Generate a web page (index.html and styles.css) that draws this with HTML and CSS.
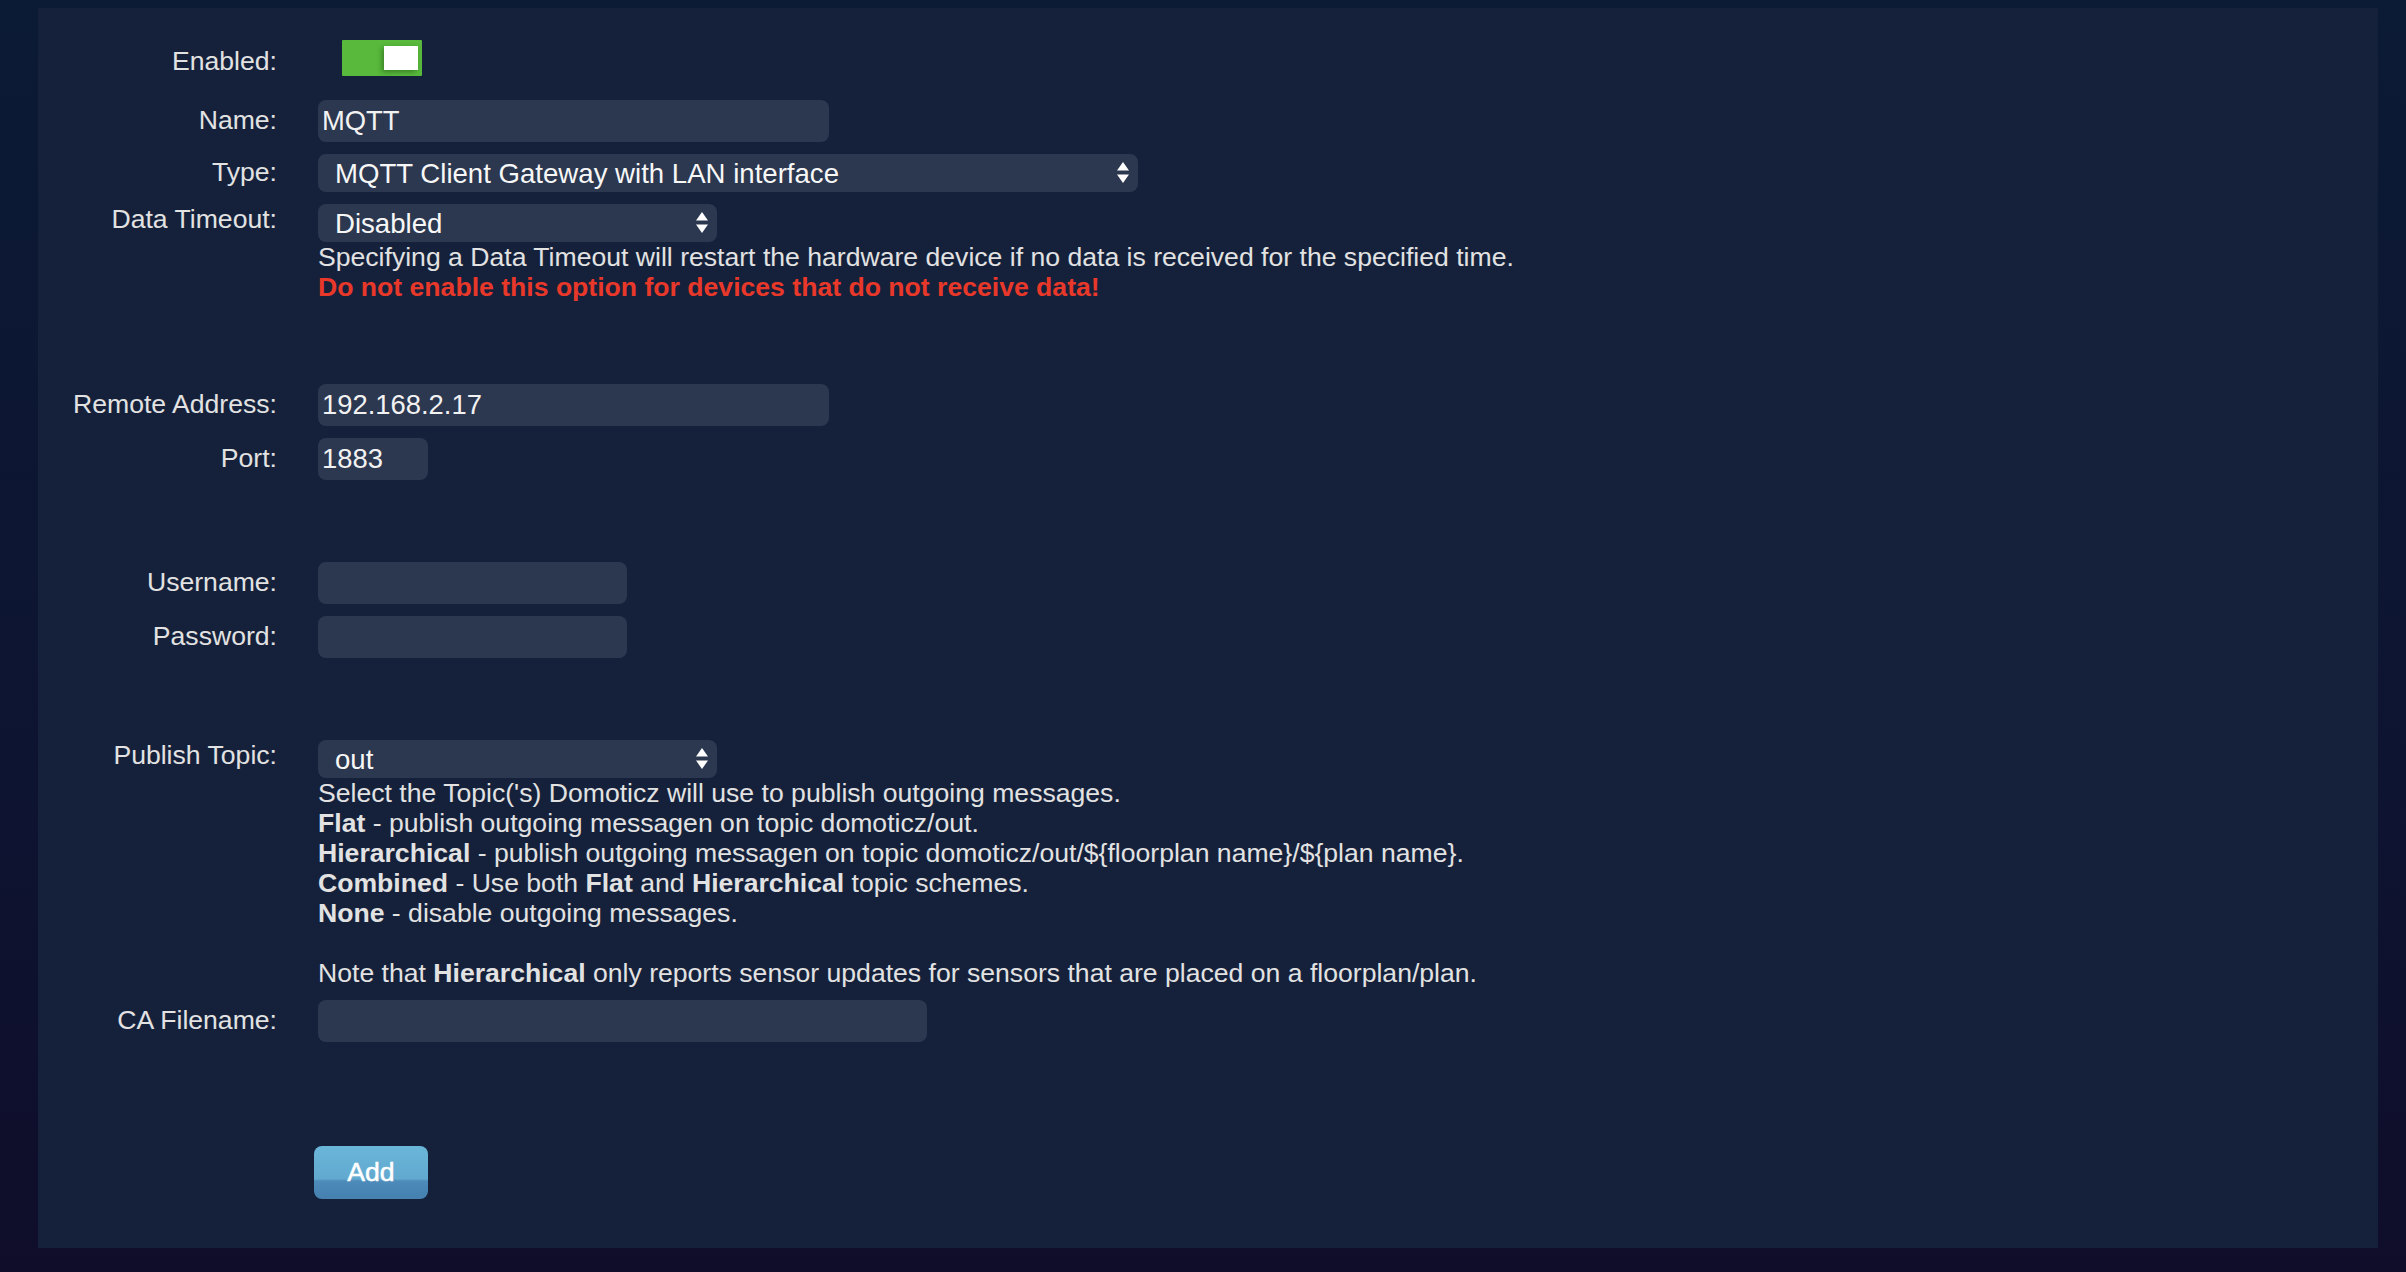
FILE: index.html
```html
<!DOCTYPE html>
<html lang="en">
<head>
<meta charset="utf-8">
<title>Hardware - MQTT</title>
<link rel="stylesheet" href="styles.css">
</head>
<body>
<div class="panel">
  <form class="hw-form">
    <div class="row row-enabled">
      <label class="lbl lbl-toggle">Enabled:</label>
      <div class="toggle"><span class="knob"></span></div>
    </div>

    <div class="row">
      <label class="lbl">Name:</label>
      <input class="field w-name" type="text" value="MQTT">
    </div>

    <div class="row">
      <label class="lbl lbl-sel">Type:</label>
      <div class="sel w-type">
        <select><option>MQTT Client Gateway with LAN interface</option></select>
        <svg class="arrows" width="12" height="22" viewBox="0 0 12 22"><path d="M6 0 L12 8.5 L0 8.5 Z M0 12.5 L12 12.5 L6 21 Z" fill="#ffffff"/></svg>
      </div>
    </div>

    <div class="row">
      <label class="lbl lbl-sel0">Data Timeout:</label>
      <div class="col">
        <div class="sel w-half">
          <select><option>Disabled</option></select>
          <svg class="arrows" width="12" height="22" viewBox="0 0 12 22"><path d="M6 0 L12 8.5 L0 8.5 Z M0 12.5 L12 12.5 L6 21 Z" fill="#ffffff"/></svg>
        </div>
        <div class="help">
          Specifying a Data Timeout will restart the hardware device if no data is received for the specified time.<br>
          <span class="warn">Do not enable this option for devices that do not receive data!</span>
        </div>
      </div>
    </div>

    <div class="spacer"></div>

    <div class="row">
      <label class="lbl">Remote Address:</label>
      <input class="field w-name" type="text" value="192.168.2.17">
    </div>

    <div class="row">
      <label class="lbl">Port:</label>
      <input class="field w-port" type="text" value="1883">
    </div>

    <div class="spacer"></div>

    <div class="row">
      <label class="lbl">Username:</label>
      <input class="field w-user" type="text" value="">
    </div>

    <div class="row">
      <label class="lbl">Password:</label>
      <input class="field w-user" type="password" value="">
    </div>

    <div class="spacer"></div>

    <div class="row">
      <label class="lbl lbl-sel0">Publish Topic:</label>
      <div class="col">
        <div class="sel w-half">
          <select><option>out</option></select>
          <svg class="arrows" width="12" height="22" viewBox="0 0 12 22"><path d="M6 0 L12 8.5 L0 8.5 Z M0 12.5 L12 12.5 L6 21 Z" fill="#ffffff"/></svg>
        </div>
        <div class="help">
          Select the Topic('s) Domoticz will use to publish outgoing messages.<br>
          <b>Flat</b> - publish outgoing messagen on topic domoticz/out.<br>
          <b>Hierarchical</b> - publish outgoing messagen on topic domoticz/out/${floorplan name}/${plan name}.<br>
          <b>Combined</b> - Use both <b>Flat</b> and <b>Hierarchical</b> topic schemes.<br>
          <b>None</b> - disable outgoing messages.<br>
          <br>
          Note that <b>Hierarchical</b> only reports sensor updates for sensors that are placed on a floorplan/plan.
        </div>
      </div>
    </div>

    <div class="row">
      <label class="lbl">CA Filename:</label>
      <input class="field w-ca" type="text" value="">
    </div>

    <div class="actions">
      <button type="button" class="btn-add">Add</button>
    </div>
  </form>
</div>
</body>
</html>
```

FILE: styles.css
```css
html, body {
  margin: 0;
  padding: 0;
}

body {
  width: 2406px;
  height: 1272px;
  background: linear-gradient(to bottom, #0b1a35 0%, #0d1431 60%, #0f0d2a 100%);
  font-family: "Liberation Sans", Arial, Helvetica, sans-serif;
  font-size: 26.6px;
  line-height: 30px;
  color: #e2e2e2;
  overflow: hidden;
  display: flex;
  flex-direction: column;
}

.panel {
  margin: 8px 28px 24px 38px;
  height: 1240px;
  background: #15213b;
  box-sizing: border-box;
  padding-top: 32px;
}

.hw-form {
  display: flex;
  flex-direction: column;
}

.row {
  display: flex;
  align-items: flex-start;
  margin-bottom: 12px;
}

.row-enabled {
  margin-bottom: 24px;
}

.lbl {
  flex: 0 0 239px;
  text-align: right;
  color: #e2e2e2;
  padding-top: 5px;
  margin-right: 41px;
  white-space: nowrap;
}

.lbl-toggle {
  padding-top: 6px;
}

.lbl-sel {
  padding-top: 3px;
}

.lbl-sel0 {
  padding-top: 0;
}

.toggle {
  position: relative;
  width: 80px;
  height: 36px;
  margin-left: 24px;
  background: #58b93c;
  border-radius: 1px;
}

.toggle .knob {
  position: absolute;
  top: 6px;
  right: 4px;
  width: 34px;
  height: 24px;
  background: #ffffff;
  box-shadow: -2px 2px 5px rgba(20, 60, 10, 0.45);
}

.field {
  box-sizing: border-box;
  height: 42px;
  margin: 0;
  border: none;
  outline: none;
  border-radius: 8px;
  background: #2c3750;
  color: #f2f2f2;
  font-family: inherit;
  font-size: 27.4px;
  padding: 0 4px;
}

.w-name { width: 511px; }
.w-port { width: 110px; }
.w-user { width: 309px; }
.w-ca { width: 609px; }

.col {
  display: flex;
  flex-direction: column;
}

.sel {
  position: relative;
  height: 38px;
}

.sel select {
  -webkit-appearance: none;
  appearance: none;
  box-sizing: border-box;
  width: 100%;
  height: 38px;
  margin: 0;
  border: none;
  outline: none;
  border-radius: 8px;
  background: #2c3750;
  color: #f7f7f7;
  font-family: inherit;
  font-size: 27.6px;
  padding: 0 30px 0 17px;
}

.sel .arrows {
  position: absolute;
  right: 9px;
  top: 8px;
  pointer-events: none;
}

.w-type { width: 820px; }
.w-half { width: 399px; }

.help {
  color: #e2e2e2;
  white-space: nowrap;
}

.help b {
  font-weight: bold;
}

.warn {
  color: #e8382a;
  font-weight: bold;
}

.spacer {
  height: 70px;
}

.actions {
  padding-left: 276px;
  padding-top: 92px;
}

.btn-add {
  width: 114px;
  height: 53px;
  border: none;
  border-radius: 8px;
  background: linear-gradient(to bottom, #6ab6d9 0%, #62a9cf 62%, #4d8bba 66%, #4580af 100%);
  color: #ffffff;
  font-family: inherit;
  font-size: 26.6px;
  -webkit-text-stroke: 0.5px #ffffff;
  padding: 0;
  cursor: pointer;
}
```
